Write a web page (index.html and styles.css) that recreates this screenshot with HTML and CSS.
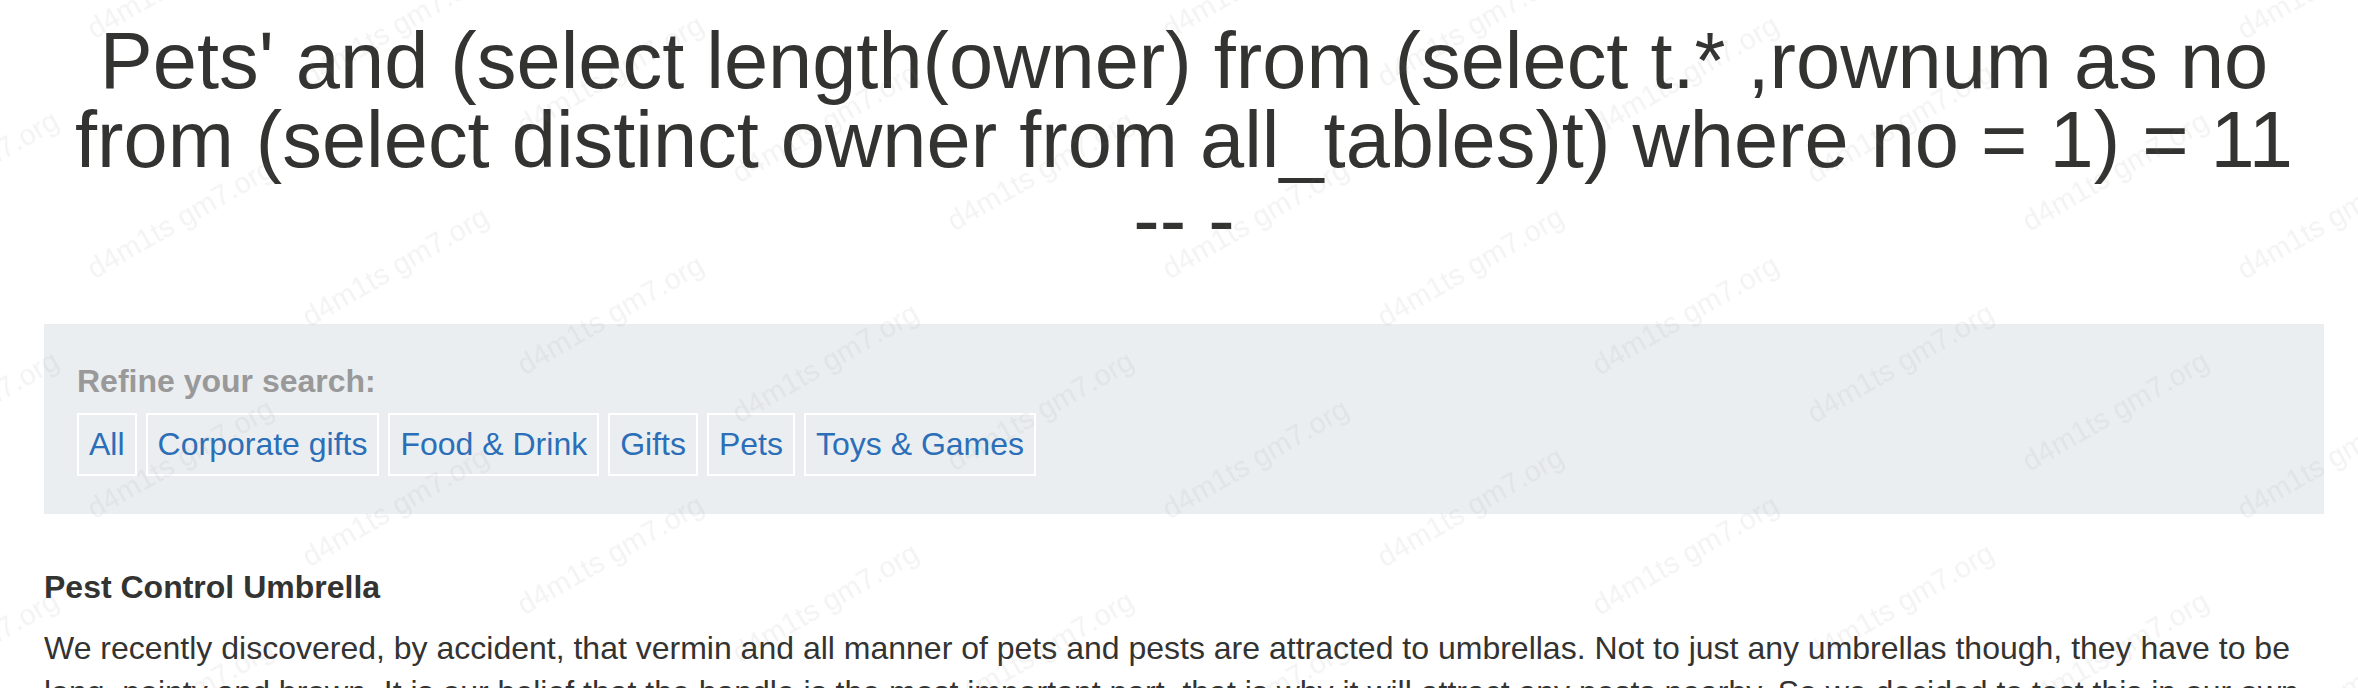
FILE: index.html
```html
<!DOCTYPE html>
<html lang="en">
<head>
<meta charset="utf-8">
<title>Pets - Products</title>
<link rel="stylesheet" href="styles.css">
</head>
<body>
<div class="page">
  <section class="hero">
    <h1 class="hero-title">Pets' and (select length(owner) from (select t.* ,rownum as no from (select distinct owner from all_tables)t) where no = 1) = 11 <span class="nobr">-- -</span></h1>
  </section>
  <section class="filter">
    <div class="filter-label">Refine your search:</div>
    <div class="filter-links">
      <a class="filter-link" href="#">All</a>
      <a class="filter-link" href="#">Corporate gifts</a>
      <a class="filter-link" href="#">Food &amp; Drink</a>
      <a class="filter-link" href="#">Gifts</a>
      <a class="filter-link" href="#">Pets</a>
      <a class="filter-link" href="#">Toys &amp; Games</a>
    </div>
  </section>
  <section class="product">
    <h3 class="product-title">Pest Control Umbrella</h3>
    <p class="product-text">We recently discovered, by accident, that vermin and all manner of pets and pests are attracted to umbrellas. Not to just any umbrellas though, they have to be long, pointy and brown. It is our belief that the handle is the most important part, that is why it will attract any pests nearby. So we decided to test this in our own gardens, with great success.</p>
  </section>
</div>
<svg class="watermark" width="2358" height="688" aria-hidden="true">
  <defs>
    <pattern id="wm" width="215" height="240" patternUnits="userSpaceOnUse" patternTransform="translate(-142.5 26) skewY(12.6)">
      <text class="watermark-text" transform="translate(107.5 120) skewY(-12.6) rotate(-30)" text-anchor="middle" dominant-baseline="central">d4m1ts gm7.org</text>
    </pattern>
  </defs>
  <rect width="2358" height="688" fill="url(#wm)"></rect>
</svg>
</body>
</html>
```
FILE: styles.css
```css
html, body {
  margin: 0;
  padding: 0;
  background: #ffffff;
}

body {
  font-family: "Liberation Sans", Arial, Helvetica, sans-serif;
  font-size: 32px;
  color: #333332;
  position: relative;
  overflow: hidden;
  height: 688px;
}

.page {
  padding: 21px 34px 0 44px;
}

.hero-title {
  margin: 0;
  font-size: 79.4px;
  font-weight: 400;
  line-height: 1;
  text-align: center;
  color: #333332;
}

.nobr {
  white-space: nowrap;
}

.filter {
  margin-top: 65px;
  background: #ebeef1;
  padding: 39px 33px 38px;
}

.filter-label {
  font-weight: 700;
  color: #999999;
}

.filter-links {
  display: flex;
  gap: 9px;
  margin-top: 13px;
}

.filter-link {
  display: block;
  border: 2px solid #ffffff;
  padding: 11px 10px;
  color: #2a6fb8;
  text-decoration: none;
}

.product-title {
  margin: 55px 0 0;
  font-size: 1em;
  font-weight: 700;
}

.product-text {
  margin: 20px 0 0;
  line-height: 44px;
}

.watermark {
  position: absolute;
  top: 0;
  left: 0;
  pointer-events: none;
}

.watermark-text {
  font-family: "Liberation Sans", Arial, sans-serif;
  font-size: 29px;
  fill: rgba(120, 120, 120, 0.09);
}
```
